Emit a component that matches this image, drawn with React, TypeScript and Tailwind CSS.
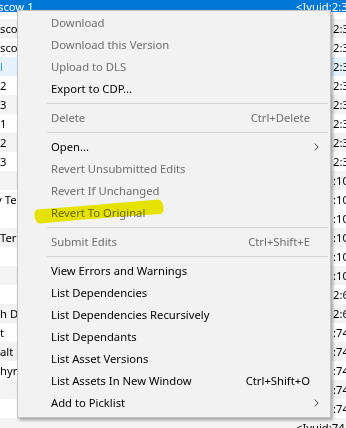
import React from "react";

type Row = { l: string; r: string; bg: string; lc?: string; wide?: boolean; sel?: boolean };

const W = "bg-white";
const G = "bg-[#f3f3f3]";

const rows: Row[] = [
  { l: "scow 1", r: "<Ivuid:2:3", bg: W, sel: true, wide: true },
  { l: "scow", r: "2:3", bg: G },
  { l: "scow", r: "2:3", bg: W },
  { l: "l", r: "2:3", bg: "bg-[#e5f3ff]", lc: "text-[#3a96dd]" },
  { l: "2", r: "2:3", bg: W },
  { l: "3", r: "2:3", bg: G },
  { l: "1", r: "2:3", bg: W },
  { l: "2", r: "2:3", bg: G },
  { l: "3", r: "2:3", bg: W },
  { l: "", r: ":10", bg: G },
  { l: "y Te", r: ":10", bg: W },
  { l: "", r: ":10", bg: W },
  { l: "Ter", r: ":10", bg: G },
  { l: "", r: ":10", bg: W },
  { l: "", r: ":10", bg: G },
  { l: "", r: "2:6", bg: W },
  { l: "h D", r: "2:6", bg: G },
  { l: "t", r: ":74", bg: W },
  { l: "alt", r: ":74", bg: G },
  { l: "hyr", r: ":74", bg: W },
  { l: "", r: ":74", bg: G },
  { l: "", r: ":74", bg: W },
  { l: "", r: "<Ivuid:74", bg: G, wide: true },
];

type Item =
  | { sep: true }
  | { sep?: false; label: string; dis?: boolean; sc?: string; arrow?: boolean };

const items: Item[] = [
  { label: "Download", dis: true },
  { label: "Download this Version", dis: true },
  { label: "Upload to DLS", dis: true },
  { label: "Export to CDP..." },
  { sep: true },
  { label: "Delete", dis: true, sc: "Ctrl+Delete" },
  { sep: true },
  { label: "Open...", arrow: true },
  { label: "Revert Unsubmitted Edits", dis: true },
  { label: "Revert If Unchanged", dis: true },
  { label: "Revert To Original", dis: true },
  { sep: true },
  { label: "Submit Edits", dis: true, sc: "Ctrl+Shift+E" },
  { sep: true },
  { label: "View Errors and Warnings" },
  { label: "List Dependencies" },
  { label: "List Dependencies Recursively" },
  { label: "List Dependants" },
  { label: "List Asset Versions" },
  { label: "List Assets In New Window", sc: "Ctrl+Shift+O" },
  { label: "Add to Picklist", arrow: true },
];

function Arrow() {
  return (
    <svg width="5" height="8" viewBox="0 0 5 8" className="block">
      <path d="M0.8 0.6 L4.2 4 L0.8 7.4" fill="none" stroke="#3a3a3a" strokeWidth="1" />
    </svg>
  );
}

export default function App() {
  return (
    <div className="relative w-[346px] h-[428px] overflow-hidden bg-white font-['Noto_Sans',sans-serif] text-[11.25px] text-black">
      {/* background list */}
      <div className="flex flex-col">
        {rows.map((row, i) =>
          row.sel ? (
            <div key={i} className={`h-[19px] ${row.bg}`}>
              <div className="flex h-[12px] bg-[#0078d7] text-white leading-[14px] whitespace-nowrap">
                <div className="w-[296px] shrink-0 overflow-hidden -ml-[2px]">{row.l}</div>
                <div className="ml-[2px]">{row.r}</div>
              </div>
            </div>
          ) : (
            <div key={i} className={`flex h-[19px] leading-[19px] whitespace-nowrap ${row.bg}`}>
              <div
                className={`${row.wide ? "w-[296px]" : "w-[333px]"} shrink-0 overflow-hidden ${row.lc ?? ""} ${row.l === "y Te" ? "-ml-[4px]" : ""}`}
              >
                {row.l}
              </div>
              <div className={row.l === "y Te" ? "ml-[4px]" : ""}>{row.r}</div>
            </div>
          )
        )}
      </div>

      {/* context menu */}
      <div className="absolute left-[17px] top-[10px] w-[314px] border border-[#c4c4c4] bg-[#f2f2f2] pt-[1px] pb-[3px] shadow-[2px_2px_3px_rgba(0,0,0,0.35)]">
        {items.map((it, i) =>
          it.sep ? (
            <div key={i} className="py-[3px] pl-[29px] pr-[2px]">
              <div className="h-px bg-[#d5d5d5]" />
            </div>
          ) : (
            <div
              key={i}
              className={`flex h-[22px] items-center whitespace-nowrap pl-[33px] ${it.arrow ? "pr-[11px]" : "pr-[20px]"} ${it.dis ? "text-[#6d6d6d]" : "text-black"}`}
            >
              <span>{it.label}</span>
              {it.sc && <span className="ml-auto">{it.sc}</span>}
              {it.arrow && (
                <span className="ml-auto">
                  <Arrow />
                </span>
              )}
            </div>
          )
        )}
      </div>

      {/* highlighter annotation */}
      <svg
        className="pointer-events-none absolute left-0 top-0 mix-blend-multiply"
        width="346"
        height="428"
        viewBox="0 0 346 428"
      >
        <path
          d="M37 209.5 C 70 207, 120 203, 158 199.5 C 164 200, 165.5 212, 161 214 C 120 216.5, 75 220, 40 223.5 C 34 223, 33 211, 37 209.5 Z"
          fill="#f2ef00"
        />
      </svg>
    </div>
  );
}
